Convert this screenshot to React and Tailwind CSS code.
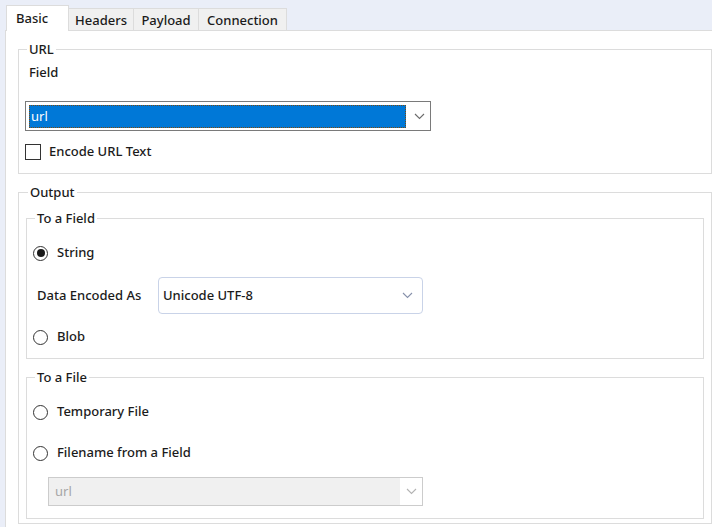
import React from 'react';

const font = { fontFamily: '"Noto Sans", "Open Sans", Arial, sans-serif' };

// Small down chevron used by the combo boxes
const Chevron = ({ color = '#6b6b6b' }) => (
  <svg width="11" height="7" viewBox="0 0 11 7" fill="none">
    <path d="M1 1 L5.5 5.5 L10 1" stroke={color} strokeWidth="1.1" />
  </svg>
);

const Radio = ({ checked, label }) => (
  <div className="flex items-center h-[16px]">
    <span className="w-[15px] h-[15px] rounded-full border border-[#333] bg-white flex items-center justify-center">
      {checked && <span className="w-[8px] h-[8px] rounded-full bg-[#1a1a1a]" />}
    </span>
    <span className="ml-[9px]">{label}</span>
  </div>
);

const Group = ({ title, className = '', children }) => (
  <fieldset className={`border border-[#dcdcdc] ${className}`}>
    <legend className="ml-[2px] px-[2px] leading-[16px]">{title}</legend>
    {children}
  </fieldset>
);

const tabs = [
  { name: 'Headers', w: 'w-[65px]' },
  { name: 'Payload', w: 'w-[65px]' },
  { name: 'Connection', w: 'w-[88px]' },
];

export default function App() {
  return (
    <div
      className="w-[712px] h-[527px] overflow-hidden bg-[#eaeef8] text-[13px] font-medium text-[#1b1b1b]"
      style={font}
    >
      {/* Tab strip */}
      <div className="h-[30px] flex items-end pl-[6px]">
        <div className="relative z-10 w-[63px] h-[26px] -mb-[1px] bg-white border-l border-t border-r border-[#dcdcdc] pl-[9px] pt-[4px] leading-[16px]">
          Basic
        </div>
        {tabs.map((t) => (
          <div
            key={t.name}
            className={`${t.w} h-[22px] bg-[#f0f0f0] border-t border-r border-[#dcdcdc] flex items-center justify-center leading-[16px]`}
          >
            {t.name}
          </div>
        ))}
      </div>

      {/* Tab page */}
      <div className="ml-[5px] w-[720px] h-[500px] bg-white border-l border-t border-[#dcdcdc] pl-[12px] pt-[10px]">
        <Group title="URL" className="w-[694px] px-[6px] pb-[13px]">
          <div className="pl-[4px] mt-[7px] leading-[16px]">Field</div>
          <div className="mt-[21px] w-[406px] h-[30px] border border-[#7a7a7a] bg-white flex items-center">
            <div className="ml-[3px] h-[23px] w-[377px] bg-[#0078d7] outline outline-1 outline-dotted outline-[#7a4a10] -outline-offset-1 text-white pl-[2px] leading-[23px] font-normal">
              url
            </div>
            <div className="flex-1 flex justify-center pl-[2px]">
              <Chevron />
            </div>
          </div>
          <div className="mt-[13px] flex items-center h-[16px]">
            <span className="w-[16px] h-[16px] border border-[#333] bg-white" />
            <span className="ml-[8px]">Encode URL Text</span>
          </div>
        </Group>

        <Group title="Output" className="mt-[10px] w-[694px] px-[7px] pb-[4px]">
          <Group title="To a Field" className="mt-[10px] w-[678px] px-[6px] pb-[13px]">
            <div className="mt-[19px]">
              <Radio checked label="String" />
            </div>
            <div className="mt-[16px] flex items-center">
              <span className="pl-[4px] w-[125px]">Data Encoded As</span>
              <div className="w-[265px] h-[37px] rounded-[4px] border border-[#c9d3e8] bg-white flex items-center pl-[4px] pr-[9px] justify-between">
                <span>Unicode UTF-8</span>
                <Chevron color="#8791ab" />
              </div>
            </div>
            <div className="mt-[15px]">
              <Radio label="Blob" />
            </div>
          </Group>

          <Group title="To a File" className="mt-[10px] w-[678px] px-[6px] pb-[12px]">
            <div className="mt-[19px]">
              <Radio label="Temporary File" />
            </div>
            <div className="mt-[25px]">
              <Radio label="Filename from a Field" />
            </div>
            <div className="mt-[16px] ml-[15px] w-[375px] h-[29px] border border-[#cccccc] bg-white flex">
              <div className="w-[351px] bg-[#f0f0f0] text-[#a6a6a6] pl-[6px] leading-[27px] font-normal">url</div>
              <div className="flex-1 flex items-center justify-center">
                <Chevron color="#b3b3b3" />
              </div>
            </div>
          </Group>
        </Group>
      </div>
    </div>
  );
}
